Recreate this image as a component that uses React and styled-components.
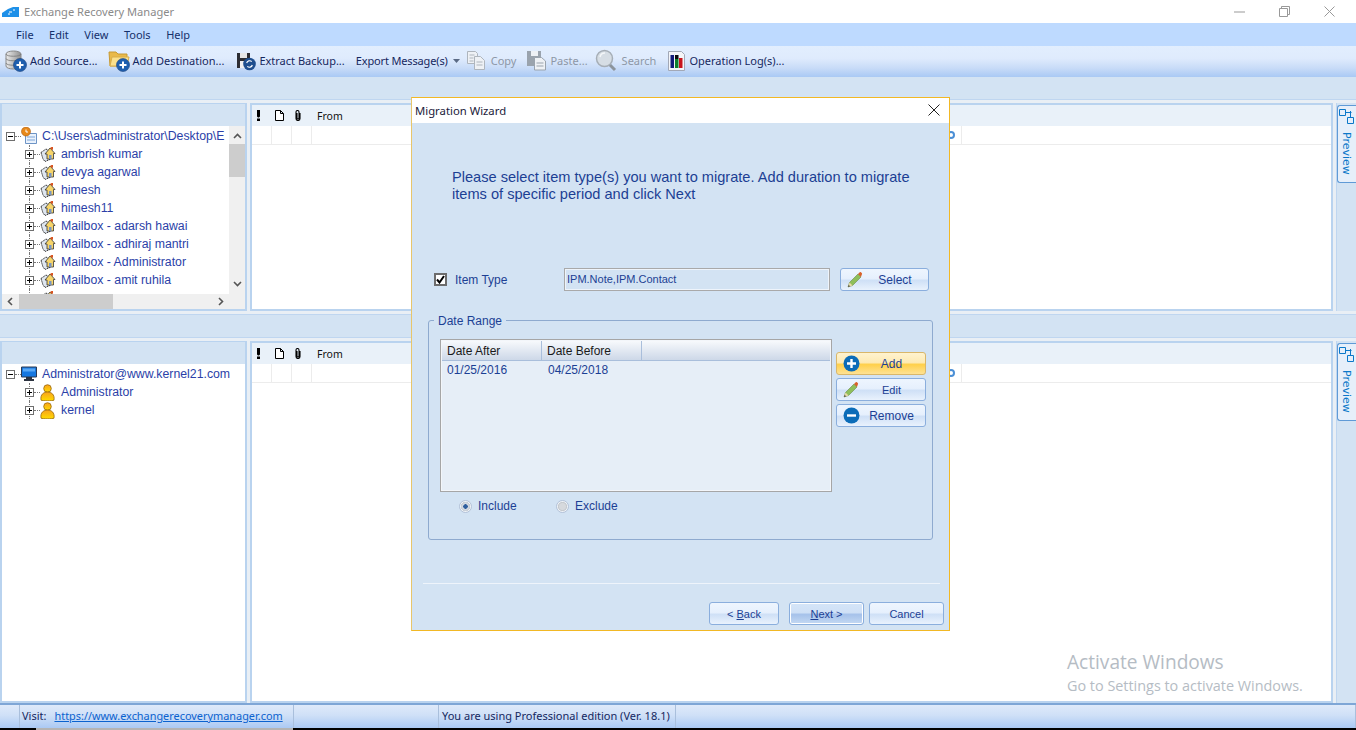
import React from "react";
import styled, { createGlobalStyle } from "styled-components";

const Global = createGlobalStyle`
  html, body { margin: 0; padding: 0; background: #000; }
  #root { width: 1356px; height: 730px; overflow: hidden; }
  * { box-sizing: border-box; }
`;

const Page = styled.div`
  position: relative;
  width: 1356px;
  height: 730px;
  display: flex;
  flex-direction: column;
  background: #e9eff5;
  font-family: "Liberation Sans", Arial, sans-serif;
`;
const TitleBar = styled.div`
  height: 23px;
  background: #fff;
  display: flex;
  align-items: center;
  padding-left: 2px;
`;
const TitleText = styled.span`
  margin-left: 4px;
  font: 11.1px "Noto Sans", sans-serif;
  color: #8a8a8a;
  flex: 1;
`;
const WinButton = styled.span`
  width: 45px;
  height: 23px;
  display: flex;
  align-items: center;
  justify-content: center;
`;
const WinButtons = styled.div`
  display: flex;
  margin-right: 4px;
`;
const MenuBar = styled.div`
  height: 23px;
  padding: 0 0 1px 16px;
  background: #bedaff;
  display: flex;
  align-items: center;
  gap: 15.5px;
`;
const MenuItem = styled.span`
  font: 11px "Noto Sans", sans-serif;
  color: #15306b;
`;
const ToolBar = styled.div`
  height: 31px;
  padding-bottom: 2px;
  background: linear-gradient(#e2eefe 0%, #dfebfd 40%, #c9dcf8 70%, #a9c9f4 100%);
  display: flex;
  align-items: center;
`;
const Tool = styled.div`
  display: flex;
  align-items: center;
  gap: ${(p) => p.$gap ?? 3}px;
  margin-left: ${(p) => p.$left}px;
  font: 11px "Noto Sans", sans-serif;
  letter-spacing: ${(p) => p.$track ?? 0}px;
  color: ${(p) => (p.$off ? "#8d97a6" : "#15275e")};
  white-space: nowrap;
`;
const Strip = styled.div`
  height: ${(p) => p.$h}px;
  flex: none;
  background: #d3e3f3;
  border: 1px solid #bfd6f0;
  border-width: ${(p) => (p.$boxed ? "1px 0" : "0 0 1px")};
  margin-top: ${(p) => (p.$boxed ? 3 : 0)}px;
`;
const PaneRow = styled.div`
  height: ${(p) => p.$h}px;
  flex: none;
  margin-top: 3px;
  display: grid;
  grid-template-columns: 247px 1083px 20px;
  column-gap: 3px;
`;
const TreePane = styled.div`
  border: 2px solid #b9d3ef;
  border-top-width: 1px;
  background: #d3e3f3;
  display: flex;
  flex-direction: column;
  min-height: 0;
`;
const TreeHead = styled.div`
  height: 22px;
  flex: none;
`;
const TreeMain = styled.div`
  flex: 1;
  min-height: 0;
  display: grid;
  grid-template-columns: minmax(0, 1fr) ${(p) => (p.$scroll ? "16px" : "0")};
  grid-template-rows: minmax(0, 1fr) ${(p) => (p.$scroll ? "15px" : "0")};
`;
const TreeBody = styled.div`
  background: #fff;
  overflow: hidden;
  padding-top: 1px;
  min-height: 0;
`;
const Row = styled.div`
  height: 18px;
  display: flex;
  align-items: center;
  position: relative;
  padding-left: ${(p) => (p.$root ? 4 : 23)}px;
  white-space: nowrap;
  overflow: hidden;
`;
const Expander = styled.span`
  width: 9px;
  height: 9px;
  flex: none;
  border: 1px solid #6f6f6f;
  position: relative;
  background: #fff;
  &::before {
    content: "";
    position: absolute;
    left: 1px;
    right: 1px;
    top: 3px;
    height: 1px;
    background: #000;
  }
  &::after {
    content: "";
    display: ${(p) => (p.$open ? "none" : "block")};
    position: absolute;
    top: 1px;
    bottom: 1px;
    left: 3px;
    width: 1px;
    background: #000;
  }
`;
const DotH = styled.span`
  width: ${(p) => p.$w}px;
  flex: none;
  border-top: 1px dotted #777;
`;
const DotV = styled.span`
  position: absolute;
  left: 27px;
  top: 0;
  bottom: 0;
  border-left: 1px dotted #777;
`;
const Node = styled.span`
  position: relative;
  z-index: 1;
  display: flex;
  align-items: center;
  flex: none;
`;
const Label = styled.span`
  margin-left: ${(p) => p.$left}px;
  font-size: 12.3px;
  color: #2b3fa8;
`;
const VScroll = styled.div`
  background: #f0f0f0;
  display: flex;
  flex-direction: column;
  align-items: center;
  justify-content: space-between;
  position: relative;
  padding: 6px 0;
`;
const VThumb = styled.div`
  position: absolute;
  top: 18px;
  left: 0;
  right: 0;
  height: 33px;
  background: #cdcdcd;
`;
const HScroll = styled.div`
  background: #f0f0f0;
  display: flex;
  align-items: center;
  justify-content: space-between;
  position: relative;
  padding: 0 4px;
`;
const HThumb = styled.div`
  position: absolute;
  left: 17px;
  top: 0;
  bottom: 0;
  width: 94px;
  background: #cdcdcd;
`;
const Corner = styled.div`
  background: #f0f0f0;
`;
const ListPane = styled.div`
  border: 2px solid #b9d3ef;
  background: #fff;
  display: flex;
  flex-direction: column;
  min-height: 0;
`;
const CellGrid = styled.div`
  display: grid;
  grid-template-columns: 20px 20px 20px 650px;
  height: ${(p) => p.$h}px;
  background: ${(p) => p.$bg};
  ${(p) => p.$line && "border-bottom: 1px solid #ececec;"}
  flex: none;
`;
const HeadCell = styled.span`
  display: flex;
  align-items: center;
  justify-content: center;
  padding-right: ${(p) => p.$shift}px;
`;
const FromCell = styled.span`
  display: flex;
  align-items: center;
  padding-left: 5px;
  font: 10.5px "Noto Sans", sans-serif;
  color: #111;
`;
const BodyCell = styled.span`
  border-right: 1px solid #ececec;
  display: flex;
  align-items: center;
  justify-content: flex-end;
  padding-right: 6px;
`;
const Ring = styled.span`
  width: 8px;
  height: 8px;
  border-radius: 50%;
  border: 2px solid #4b8fd6;
`;
const PreviewCol = styled.div`
  background: #d3e3f3;
  border-left: 1px solid #bfd6f0;
  padding: 2px 0 0;
`;
const PreviewTab = styled.div`
  height: 78px;
  background: #e6effa;
  border: 1px solid #5f9ad6;
  border-right: 0;
  border-radius: 3px 0 0 3px;
  display: flex;
  flex-direction: column;
  align-items: center;
  padding: 2px 2px 0 0;
  gap: 7px;
`;
const PreviewText = styled.span`
  writing-mode: vertical-rl;
  font: 11px "DejaVu Sans", sans-serif;
  color: #0b78c9;
`;
const StatusBar = styled.div`
  height: 25px;
  flex: none;
  border-top: 2px solid #7ea6d6;
  background: linear-gradient(#dfeafa, #cfe0f7 45%, #abc9f3);
  display: grid;
  grid-template-columns: 20px 274px 145px 237px 1fr;
`;
const StatusCell = styled.div`
  border-right: 1px solid #a9bfdc;
  display: flex;
  align-items: center;
  font: 11px "Noto Sans", sans-serif;
  color: #15275e;
  padding-left: ${(p) => p.$pad ?? 3}px;
  padding-bottom: 2px;
  white-space: nowrap;
  overflow: hidden;
`;
const StatusLink = styled.a`
  margin-left: 8px;
  font-size: 10.9px;
  color: #0b62cf;
  text-decoration: underline;
`;
const Foot = styled.div`
  height: 2px;
  flex: none;
  background: #000;
  display: flex;
  padding-left: 36px;
`;
const FootPiece = styled.div`
  width: 257px;
  background: #b4b4b4;
`;
const Watermark = styled.div`
  position: absolute;
  left: 1067px;
  top: 650px;
  font-family: "Open Sans", sans-serif;
  color: #b5bcc4;
`;
const WaterBig = styled.div`
  font-size: 19.1px;
  line-height: 25px;
`;
const WaterSmall = styled.div`
  font-size: 14.4px;
  line-height: 21px;
`;
const Dialog = styled.div`
  position: absolute;
  left: 411px;
  top: 97px;
  width: 539px;
  height: 534px;
  background: #d3e3f3;
  border: 1px solid #f2b824;
  border-left-color: #e8c66a;
  display: flex;
  flex-direction: column;
  color: #1c3f94;
`;
const DialogTitle = styled.div`
  height: 25px;
  flex: none;
  background: #fff;
  display: flex;
  align-items: center;
  justify-content: space-between;
  padding: 0 9px 1px 3px;
  font: 11.3px "Noto Sans", sans-serif;
  color: #1a1a3a;
`;
const Heading = styled.p`
  margin: 46px 0 0 40px;
  width: 480px;
  font-size: 14.6px;
  line-height: 17px;
  color: #1c3f94;
`;
const TypeRow = styled.div`
  margin: 65px 0 0 22px;
  height: 23px;
  flex: none;
  display: flex;
  align-items: center;
`;
const Check = styled.span`
  width: 13px;
  height: 13px;
  flex: none;
  background: #fff;
  border: 2px solid #6c6c6c;
  display: flex;
  align-items: center;
  justify-content: center;
`;
const TypeLabel = styled.span`
  margin-left: 8px;
  width: 109px;
  font-size: 12px;
`;
const TypeInput = styled.div`
  width: 266px;
  height: 23px;
  border: 1px solid #a9a9a9;
  box-shadow: inset 0 0 0 1px #eef4fb;
  font-size: 11px;
  padding: 4px 0 0 2px;
`;
const Btn = styled.button`
  width: ${(p) => p.$w}px;
  height: 23px;
  flex: none;
  padding: 0;
  border-radius: 3px;
  border: 1px solid ${(p) => (p.$tone === "gold" ? "#d9b76a" : "#8aaedd")};
  background: ${(p) =>
    p.$tone === "gold"
      ? "linear-gradient(#fff3cf, #fdeab4 45%, #ffd04a 55%, #fee294)"
      : p.$tone === "focus"
        ? "linear-gradient(#d5e5f8, #cfe0f6 45%, #a6c2ea 55%, #c4d9f3)"
        : "linear-gradient(#eef5fe, #e6f0fd 45%, #cfe0f6 55%, #e9f2fd)"};
  ${(p) => p.$tone === "focus" && "box-shadow: inset 0 0 0 1px #fff;"}
  font: 12px "Liberation Sans", sans-serif;
  color: #1c3f94;
  display: flex;
  align-items: center;
  position: relative;
`;
const BtnIcon = styled.span`
  position: absolute;
  left: ${(p) => p.$left ?? 6}px;
  top: 2px;
  display: flex;
`;
const BtnText = styled.span`
  flex: 1;
  text-align: center;
  padding-left: ${(p) => p.$pad ?? 0}px;
  font-size: ${(p) => p.$size ?? 12}px;
`;
const Group = styled.fieldset`
  margin: 21px 0 0 16px;
  padding: 0 0 0 11px;
  width: 505px;
  height: 228px;
  flex: none;
  border: 1px solid #8eaacf;
  border-radius: 3px;
`;
const Legend = styled.legend`
  margin-left: -6px;
  padding: 2px 4px 0;
  font-size: 12px;
  line-height: 14px;
`;
const GroupTop = styled.div`
  display: flex;
  margin-top: 11px;
`;
const List = styled.div`
  width: 392px;
  height: 153px;
  border: 1px solid #a6a6a6;
  box-shadow: inset 0 0 0 1px #f3f6fa;
  background: #e6eef7;
  padding: 1px;
`;
const ListHead = styled.div`
  height: 20px;
  display: grid;
  grid-template-columns: 100px 100px 1fr;
  border-bottom: 1px solid #a9bedb;
  background: linear-gradient(#f7f9fc, #cdd8e8);
  font-size: 12px;
  color: #1a1a1a;
`;
const ListHeadCell = styled.span`
  padding-left: 5px;
  display: flex;
  align-items: center;
  border-right: 1px solid #a9bedb;
  &:last-child { border-right: 0; }
`;
const ListRow = styled.div`
  display: grid;
  grid-template-columns: 101px 1fr;
  height: 18px;
  align-items: center;
  font-size: 12px;
  padding-left: 5px;
`;
const SideButtons = styled.div`
  margin: 13px 0 0 4px;
  display: flex;
  flex-direction: column;
  gap: 3px;
`;
const RadioRow = styled.div`
  display: flex;
  align-items: center;
  margin: 7px 0 0 19px;
  height: 14px;
  font-size: 12px;
`;
const Radio = styled.span`
  width: 13px;
  height: 13px;
  border-radius: 50%;
  border: 1px solid #b3c2d8;
  background: ${(p) =>
    p.$on
      ? "radial-gradient(circle, #2f5f9e 0 2px, #d8dde4 2.5px, #c6ccd4 4.5px, #eef2f6 5px)"
      : "radial-gradient(circle, #d6d9dd 0 3px, #c4c8cd 4.2px, #eef2f6 5px)"};
`;
const RadioLabel = styled.span`
  margin-left: 6px;
  width: ${(p) => p.$w}px;
`;
const Separator = styled.div`
  margin: 43px 0 0 11px;
  width: 517px;
  height: 1px;
  flex: none;
  background: #eef4fb;
`;
const Footer = styled.div`
  margin-top: 18px;
  padding-left: 297px;
  display: flex;
`;
const GapBtn = styled.span`
  margin-left: ${(p) => p.$left}px;
  display: flex;
`;

const Plus = ({ x = 0, y = 0 }) => (
  <g transform={`translate(${x} ${y})`}>
    <circle cx="6.500" cy="6.500" r="6.500" fill="#1f5fae" stroke="#173f7c" strokeWidth=".6" />
    <path d="M6.500 3v7M3 6.500h7" stroke="#fff" strokeWidth="2" />
  </g>
);
const DbIcon = () => (
  <svg width="22" height="22" viewBox="0 0 22 22">
    <defs>
      <linearGradient id="db" x1="0" x2="1"><stop offset="0" stopColor="#ececec" /><stop offset="1" stopColor="#8f8f8f" /></linearGradient>
    </defs>
    <path d="M1 4c0-4 15-4 15 0v12c0 4-15 4-15 0z" fill="url(#db)" stroke="#8a8a8a" />
    <path d="M1 4c0 3 15 3 15 0M1 8.500c0 3 15 3 15 0M1 13c0 3 15 3 15 0" fill="none" stroke="#777" strokeWidth=".8" />
    <Plus x="8.500" y="8.500" />
  </svg>
);
const FolderIcon = () => (
  <svg width="22" height="22" viewBox="0 0 22 22">
    <path d="M1 2h7l2 2h9v12H2z" fill="#e9b949" stroke="#c79a35" />
    <path d="M2 16l2-9h17l-2 9z" fill="#fbe08c" stroke="#d8ad4a" />
    <Plus x="8.500" y="8.500" />
  </svg>
);
const BackupIcon = () => (
  <svg width="20" height="21" viewBox="0 0 20 21">
    <path d="M1 3h13v15H1z" fill="#2d2d33" />
    <path d="M4 3h7v5H4z" fill="#e6e6e6" />
    <path d="M4 11h7v7H4z" fill="#f0f0f0" />
    <circle cx="13.500" cy="14" r="6.300" fill="#1f4f8f" />
    <path d="M10.700 13a3 3 0 0 1 5-1.400M16.300 15a3 3 0 0 1-5 1.400" fill="none" stroke="#fff" strokeWidth="1.200" />
  </svg>
);
const CopyIcon = () => (
  <svg width="20" height="21" viewBox="0 0 20 21" fill="#eef1f5" stroke="#aeb5bd">
    <path d="M1.500 1.500h8l2 2v10h-10z" />
    <path d="M8.500 6.500h6l4 4v9h-10z" />
    <path d="M3.500 5h5M3.500 8h4M3.500 11h4M10.500 12h6M10.500 15h6" fill="none" />
  </svg>
);
const PasteIcon = () => (
  <svg width="20" height="21" viewBox="0 0 20 21">
    <path d="M1 1h14v15H1z" fill="#9aa3ad" />
    <path d="M5 1h7v5H5z" fill="#eef1f5" />
    <path d="M8.500 7.500h7l4 3.500v9h-11z" fill="#eef1f5" stroke="#9aa3ad" />
    <path d="M10.500 13h7M10.500 16h7" stroke="#9aa3ad" />
  </svg>
);
const SearchIcon = () => (
  <svg width="22" height="23" viewBox="0 0 22 23">
    <path d="M14 15l6 6" stroke="#8c949c" strokeWidth="3" />
    <circle cx="9.500" cy="9.500" r="8" fill="#d6dde4" stroke="#a6aeb6" strokeWidth="1.500" />
    <path d="M5 8a5 5 0 0 1 5-4" stroke="#f4f6f8" strokeWidth="1.500" fill="none" />
  </svg>
);
const LogIcon = () => (
  <svg width="19" height="22" viewBox="0 0 19 22">
    <path d="M1.500 1.500h13l3 3v16h-16z" fill="#f4f5f8" stroke="#a2a8b6" />
    <path d="M3.500 5h3.500v13H3.500z" fill="#121a78" />
    <path d="M8 9h3.500v9H8z" fill="#0f7f2c" />
    <path d="M8 5h3.500v4H8z" fill="#0b0b0b" />
    <path d="M12 8h3.500v10H12z" fill="#c8141c" />
  </svg>
);
const Caret = () => (
  <svg width="7" height="4" viewBox="0 0 7 4"><path d="M0 0h7L3.500 4z" fill="#5a6a85" /></svg>
);
const RootFile = () => (
  <svg width="16" height="18" viewBox="0 0 16 18">
    <path d="M4.500 6.500h11v10h-11z" fill="#eaf2fc" stroke="#6d94c6" />
    <path d="M6 10h8M6 13h8" stroke="#7fa6d8" />
    <circle cx="5" cy="4.500" r="4.500" fill="#e8891a" stroke="#a85a10" strokeWidth=".6" />
    <path d="M5 2.500v2.500h2" stroke="#fff" strokeWidth="1" fill="none" />
  </svg>
);
const MailIcon = () => (
  <svg width="17" height="16" viewBox="0 0 17 16">
    <path d="M1 6.500 6 3l5 3v7l-6 2.500L3 13z" fill="#dfe6ef" stroke="#222" strokeWidth=".9" strokeDasharray="1.400 .6" />
    <path d="M5 8l5-6 5 5.500h-1.500V13H7V8z" fill="#f6d469" stroke="#333" strokeWidth=".8" />
    <path d="M10 2l2 2 1-.5V1h-1.500z" fill="#d9531e" />
    <path d="M9 9h2.500v4H9z" fill="#7795c4" />
  </svg>
);
const PersonIcon = () => (
  <svg width="15" height="17" viewBox="0 0 15 17">
    <defs>
      <linearGradient id="ps" x1="0" x2="0" y1="0" y2="1"><stop offset="0" stopColor="#f9a21e" /><stop offset="1" stopColor="#ffdc00" /></linearGradient>
    </defs>
    <circle cx="7.500" cy="4.500" r="3.800" fill="url(#ps)" stroke="#8a5a00" strokeWidth=".7" />
    <path d="M1 16.200c-1-6 3-8.200 6.500-8.200s7.500 2.200 6.500 8.200c-2 .8-11 .8-13 0z" fill="url(#ps)" stroke="#8a5a00" strokeWidth=".7" />
  </svg>
);
const MonitorIcon = () => (
  <svg width="16" height="16" viewBox="0 0 16 16">
    <path d="M.5 1h15v10H.5z" fill="#1577e0" stroke="#2a3a55" />
    <path d="M2 2.500h12v3H2z" fill="#58a8f6" />
    <path d="M5 11h6v2H5zM3 13h10v2H3z" fill="#2c3340" />
  </svg>
);
const Bang = () => (
  <svg width="5" height="11" viewBox="0 0 5 11"><path d="M1 0h3v6.500L3 7.500H2L1 6.500zM1 8.500h3V11H1z" fill="#000" /></svg>
);
const DocGlyph = () => (
  <svg width="9" height="11" viewBox="0 0 9 11"><path d="M.5.500h5l3 3v7h-8zM5.500.500v3h3" fill="#fff" stroke="#000" /></svg>
);
const Clip = () => (
  <svg width="6" height="11" viewBox="0 0 6 11"><path d="M2 3v5a1 1 0 0 0 2 0V2a1.500 1.500 0 0 0-3 0M1 2v6.500a2 2 0 0 0 4 0V3" fill="none" stroke="#000" strokeWidth="1.100" /></svg>
);
const Pencil = () => (
  <svg width="17" height="17" viewBox="0 0 17 17">
    <path d="M1 16l1.500-4.500L11 3l3 3-8.500 8.500z" fill="#8fbf5a" stroke="#6a8a4a" strokeWidth=".6" />
    <path d="M1 16l1.500-4.500 3 3z" fill="#e9d9a8" />
    <path d="M1 16l.7-2 1.300 1.300z" fill="#333" />
    <path d="M11 3l1.500-1.500c.8-.6 1.300-.5 2 .2s.8 1.300.2 2L14 6z" fill="#d9622a" />
  </svg>
);
const RoundBtnIcon = ({ minus }) => (
  <svg width="17" height="17" viewBox="0 0 17 17">
    <circle cx="8.500" cy="8.500" r="8" fill="#0b6cb8" />
    <path d={minus ? "M4 8.500h9" : "M4 8.500h9M8.500 4v9"} stroke="#fff" strokeWidth="2.400" />
  </svg>
);
const Chev = ({ d }) => (
  <svg width="9" height="9" viewBox="0 0 9 9">
    <path d={d} fill="none" stroke="#555" strokeWidth="1.600" />
  </svg>
);
const PreviewGlyph = () => (
  <svg width="15" height="17" viewBox="0 0 15 17" fill="none" stroke="#0b78c9">
    <path d="M.5 1.500h6v6h-6zM6.500 4.500h6M8.500 9.500h6v6h-6zM11.500 3v6.500" />
  </svg>
);

const sources = ["ambrish kumar", "devya agarwal", "himesh", "himesh11", "Mailbox - adarsh hawai", "Mailbox - adhiraj mantri", "Mailbox - Administrator", "Mailbox - amit ruhila", ""];
const accounts = ["Administrator", "kernel"];

const ListColumns = () => (
  <ListPane>
    <CellGrid $h={21} $bg="#e9f1f9">
      <HeadCell $shift={8}><Bang /></HeadCell>
      <HeadCell $shift={6}><DocGlyph /></HeadCell>
      <HeadCell $shift={8}><Clip /></HeadCell>
      <FromCell>From</FromCell>
    </CellGrid>
    <CellGrid $h={19} $bg="#fff" $line>
      <BodyCell /><BodyCell /><BodyCell />
      <BodyCell><Ring /></BodyCell>
    </CellGrid>
  </ListPane>
);

const Preview = () => (
  <PreviewCol>
    <PreviewTab>
      <PreviewGlyph />
      <PreviewText>Preview</PreviewText>
    </PreviewTab>
  </PreviewCol>
);

const TreeRoot = ({ icon, text, left }) => (
  <Row $root>
    <Expander $open />
    <DotH $w={6} />
    <Node>{icon}</Node>
    <Label $left={left}>{text}</Label>
  </Row>
);
const TreeChild = ({ icon, text, left }) => (
  <Row>
    <DotV />
    <Node><Expander /></Node>
    <DotH $w={6} />
    <Node>{icon}</Node>
    <Label $left={left}>{text}</Label>
  </Row>
);

export default function App() {
  return (
    <Page>
      <Global />
      <TitleBar>
        <svg width="18" height="12" viewBox="0 0 18 12">
          <path d="M0 11V7l3-2 3-2 5-2h6v10z" fill="#1e90e8" />
          <path d="M7 6h3M11 4h2M6 8h2" stroke="#fff" />
        </svg>
        <TitleText>Exchange Recovery Manager</TitleText>
        <WinButtons>
          <WinButton>
            <svg width="11" height="2" viewBox="0 0 11 2"><path d="M0 1h11" stroke="#999" /></svg>
          </WinButton>
          <WinButton>
            <svg width="11" height="11" viewBox="0 0 11 11" fill="none" stroke="#999"><path d="M.5 2.500h8v8h-8zM2.500 2.500v-2h8v8h-2" /></svg>
          </WinButton>
          <WinButton>
            <svg width="11" height="11" viewBox="0 0 11 11" stroke="#999"><path d="M.5.500l10 10M10.500.500l-10 10" /></svg>
          </WinButton>
        </WinButtons>
      </TitleBar>
      <MenuBar>
        <MenuItem>File</MenuItem>
        <MenuItem>Edit</MenuItem>
        <MenuItem>View</MenuItem>
        <MenuItem>Tools</MenuItem>
        <MenuItem>Help</MenuItem>
      </MenuBar>
      <ToolBar>
        <Tool $left={5}><DbIcon />Add Source...</Tool>
        <Tool $left={10}><FolderIcon />Add Destination...</Tool>
        <Tool $left={12}><BackupIcon />Extract Backup...</Tool>
        <Tool $left={11} $gap={5} $track={-0.15}>Export Message(s)<Caret /></Tool>
        <Tool $left={6} $off $gap={5}><CopyIcon />Copy</Tool>
        <Tool $left={10} $off $gap={4}><PasteIcon />Paste...</Tool>
        <Tool $left={7} $off $gap={5}><SearchIcon />Search</Tool>
        <Tool $left={11} $gap={3}><LogIcon />Operation Log(s)...</Tool>
      </ToolBar>
      <Strip $h={23} />
      <PaneRow $h={208}>
        <TreePane>
          <TreeHead />
          <TreeMain $scroll>
            <TreeBody>
              <TreeRoot icon={<RootFile />} text="C:\Users\administrator\Desktop\E" left={5} />
              {sources.map((s, i) => (
                <TreeChild key={i} icon={<MailIcon />} text={s} left={4} />
              ))}
            </TreeBody>
            <VScroll>
              <VThumb />
              <Chev d="M1 6l3.500-3.500L8 6" />
              <Chev d="M1 3l3.500 3.500L8 3" />
            </VScroll>
            <HScroll>
              <HThumb />
              <Chev d="M6 1L2.500 4.500 6 8" />
              <Chev d="M3 1l3.500 3.500L3 8" />
            </HScroll>
            <Corner />
          </TreeMain>
        </TreePane>
        <ListColumns />
        <Preview />
      </PaneRow>
      <Strip $h={24} $boxed />
      <PaneRow $h={362}>
        <TreePane>
          <TreeHead />
          <TreeMain>
            <TreeBody>
              <TreeRoot icon={<MonitorIcon />} text="Administrator@www.kernel21.com" left={5} />
              {accounts.map((s) => (
                <TreeChild key={s} icon={<PersonIcon />} text={s} left={6} />
              ))}
            </TreeBody>
          </TreeMain>
        </TreePane>
        <ListColumns />
        <Preview />
      </PaneRow>
      <StatusBar>
        <StatusCell />
        <StatusCell $pad={2}>Visit:<StatusLink>https://www.exchangerecoverymanager.com</StatusLink></StatusCell>
        <StatusCell />
        <StatusCell>You are using Professional edition (Ver. 18.1)</StatusCell>
        <StatusCell />
      </StatusBar>
      <Foot><FootPiece /></Foot>
      <Watermark>
        <WaterBig>Activate Windows</WaterBig>
        <WaterSmall>Go to Settings to activate Windows.</WaterSmall>
      </Watermark>
      <Dialog>
        <DialogTitle>
          Migration Wizard
          <svg width="12" height="12" viewBox="0 0 12 12" stroke="#222"><path d="M.5.500l11 11M11.500.500l-11 11" /></svg>
        </DialogTitle>
        <Heading>Please select item type(s) you want to migrate. Add duration to migrate items of specific period and click Next</Heading>
        <TypeRow>
          <Check>
            <svg width="9" height="9" viewBox="0 0 9 9"><path d="M1 4.500l2.500 3L8 1" fill="none" stroke="#000" strokeWidth="2" /></svg>
          </Check>
          <TypeLabel>Item Type</TypeLabel>
          <TypeInput>IPM.Note,IPM.Contact</TypeInput>
          <GapBtn $left={10}>
            <Btn $w={89}><BtnIcon><Pencil /></BtnIcon><BtnText $pad={21}>Select</BtnText></Btn>
          </GapBtn>
        </TypeRow>
        <Group>
          <Legend>Date Range</Legend>
          <GroupTop>
            <List>
              <ListHead>
                <ListHeadCell>Date After</ListHeadCell>
                <ListHeadCell>Date Before</ListHeadCell>
                <ListHeadCell />
              </ListHead>
              <ListRow><span>01/25/2016</span><span>04/25/2018</span></ListRow>
            </List>
            <SideButtons>
              <Btn $w={90} $tone="gold"><BtnIcon><RoundBtnIcon /></BtnIcon><BtnText $pad={21}>Add</BtnText></Btn>
              <Btn $w={90}><BtnIcon><Pencil /></BtnIcon><BtnText $pad={21} $size={11}>Edit</BtnText></Btn>
              <Btn $w={90}><BtnIcon><RoundBtnIcon minus /></BtnIcon><BtnText $pad={21}>Remove</BtnText></Btn>
            </SideButtons>
          </GroupTop>
          <RadioRow>
            <Radio $on /><RadioLabel $w={78}>Include</RadioLabel>
            <Radio /><RadioLabel $w={60}>Exclude</RadioLabel>
          </RadioRow>
        </Group>
        <Separator />
        <Footer>
          <Btn $w={70}><BtnText $size={11}>&lt; <u>B</u>ack</BtnText></Btn>
          <GapBtn $left={10}><Btn $w={75} $tone="focus"><BtnText $size={11}><u>N</u>ext &gt;</BtnText></Btn></GapBtn>
          <GapBtn $left={5}><Btn $w={75}><BtnText $size={11}>Cancel</BtnText></Btn></GapBtn>
        </Footer>
      </Dialog>
    </Page>
  );
}
